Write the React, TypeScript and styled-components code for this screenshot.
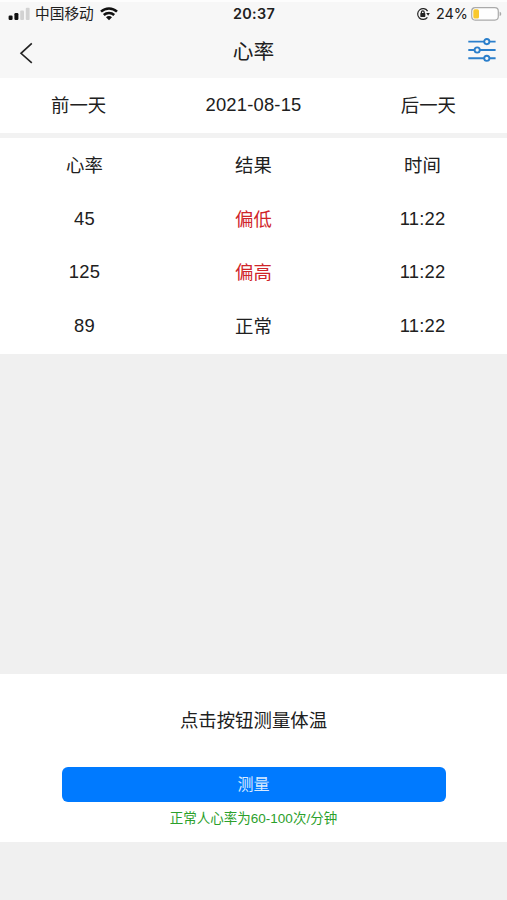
import React from "react";
import styled, { createGlobalStyle } from "styled-components";

const GlobalStyle = createGlobalStyle`
  * { box-sizing: border-box; }
  body {
    margin: 0;
    background: #f0f0f0;
    color: #202020;
    font-family: "Liberation Sans", "Noto Sans CJK SC", sans-serif;
    font-size: 18.4px;
  }
`;

const Screen = styled.div`
  display: flex;
  flex-direction: column;
  width: 507px;
  height: 900px;
  overflow: hidden;
  background: #f0f0f0;
`;

const Header = styled.header`
  height: 78px;
  border-top: 2px solid #fdfdfd;
  background: #f7f7f7;
`;

const StatusBar = styled.div`
  display: grid;
  grid-template-columns: 1fr auto 1fr;
  align-items: center;
  height: 23px;
  padding: 0 3px 0 8px;
  font-family: Inter, "Noto Sans CJK SC", sans-serif;
  font-size: 14.7px;
  line-height: 22px;
`;

const StatusGroup = styled.div<{ $end?: boolean }>`
  display: flex;
  align-items: center;
  justify-content: ${(p) => (p.$end ? "flex-end" : "flex-start")};
`;

const Carrier = styled.span`
  margin: 0 6px 0 5px;
`;

const Clock = styled.time`
  font-weight: 600;
  font-size: 14.4px;
  letter-spacing: 0.3px;
  transform: translateX(-2px);
`;

const Percent = styled.span`
  margin: 0 3px 0 6px;
  font-size: 14.4px;
`;

const TitleBar = styled.div`
  display: grid;
  grid-template-columns: 1fr auto 1fr;
  align-items: center;
  height: 53px;
  padding: 0 10px 0 18px;
`;

const Title = styled.h1`
  margin: 1px 0 0 -8px;
  font-size: 20.7px;
  line-height: 28px;
  font-weight: 400;
`;

const IconButton = styled.button<{ $end?: boolean }>`
  display: flex;
  justify-self: ${(p) => (p.$end ? "end" : "start")};
  padding: 0;
  margin: ${(p) => (p.$end ? "0 0 3px" : "2px 0 0")};
  border: 0;
  background: none;
`;

const DayBar = styled.nav`
  display: flex;
  align-items: center;
  justify-content: space-between;
  height: 60px;
  padding: 0 51px;
  background: #fff;
  border-bottom: 5px solid #f2f2f2;
`;

const DayLink = styled.span`
  padding-top: 1px;
  line-height: 26px;
`;

const DateText = styled.span`
  padding-bottom: 1px;
  line-height: 26px;
  letter-spacing: 0.2px;
`;

const Table = styled.div`
  display: grid;
  grid-template-rows: repeat(4, 53.8px);
  height: 216px;
  background: #fff;
`;

const Row = styled.div`
  display: grid;
  grid-template-columns: repeat(3, 1fr);
  align-items: center;
  text-align: center;
`;

const Cell = styled.span<{ $label?: boolean; $alert?: boolean }>`
  padding-top: ${(p) => (p.$label ? "2px" : "0")};
  line-height: 26px;
  letter-spacing: ${(p) => (p.$label ? "0" : "0.2px")};
  color: ${(p) => (p.$alert ? "#cf2529" : "inherit")};
`;

const MeasurePanel = styled.section`
  display: flex;
  flex-direction: column;
  align-items: center;
  height: 168px;
  margin-top: 320px;
  padding-top: 34px;
  background: #fff;
`;

const Prompt = styled.p`
  margin: 0;
  line-height: 26px;
`;

const MeasureButton = styled.button`
  width: 384px;
  height: 35px;
  margin-top: 33px;
  padding: 0;
  border: 0;
  border-radius: 6px;
  background: #007aff;
  color: #d9ebff;
  font: inherit;
  font-size: 16px;
  line-height: 36px;
`;

const Hint = styled.p`
  margin: 7px 0 0;
  color: #2ba02b;
  font-size: 13.5px;
  line-height: 20px;
`;

const readings = [
  { rate: 45, result: "偏低", time: "11:22", alert: true },
  { rate: 125, result: "偏高", time: "11:22", alert: true },
  { rate: 89, result: "正常", time: "11:22", alert: false },
];

const SignalIcon = () => (
  <svg width="22" height="14" viewBox="0 0 22 14">
    <rect x="0.6" y="8.5" width="4" height="4.5" rx="1.2" fill="#111" />
    <rect x="6.4" y="6" width="4" height="7" rx="1.2" fill="#111" />
    <rect x="12.2" y="3.5" width="3.8" height="9.5" rx="1" fill="#d2d2d2" />
    <rect x="17.8" y="0.8" width="3.8" height="12.2" rx="1" fill="#d2d2d2" />
  </svg>
);

const WifiIcon = () => (
  <svg width="18" height="14" viewBox="0 0 18 14" fill="none" stroke="#111" strokeWidth="2.5">
    <path d="M1 4.7C5.5 .3 12.5 .3 17 4.7" />
    <path d="M3.8 8c2.9-2.8 7.5-2.8 10.4 0" />
    <path d="M6 10.2c1.6-1.5 4.4-1.5 6 0L9 13.2Z" fill="#111" stroke="none" />
  </svg>
);

const RotationLockIcon = () => (
  <svg width="14" height="14" viewBox="0 0 14 14" fill="none" stroke="#222" strokeWidth="1.2">
    <path d="M11.6 4.1A5.4 5.4 0 1 0 11.4 10.3" />
    <path d="M10.2 5.9h3.6l-1.6 2.8Z" fill="#222" stroke="none" />
    <rect x="4.3" y="6.1" width="5" height="3.8" rx="0.6" fill="#222" stroke="none" />
    <path d="M5.4 6.4V5.2a1.4 1.4 0 0 1 2.8 0v1.2" />
  </svg>
);

const BatteryIcon = () => (
  <svg width="33" height="14" viewBox="0 0 33 14">
    <rect x="0.7" y="0.7" width="26.6" height="12.4" rx="3.5" fill="#fefefe" stroke="#aaa" strokeWidth="1.2" />
    <rect x="2.3" y="2.3" width="5.7" height="9.2" rx="1.6" fill="#f8c82e" />
    <path d="M28.6 4.7c2.2.6 2.2 3.8 0 4.4Z" fill="#aaa" />
  </svg>
);

const BackIcon = () => (
  <svg width="16" height="22" viewBox="0 0 16 22" fill="none" stroke="#222" strokeWidth="1.6">
    <path d="M13.8 1.4 3 11.3l10.8 9.5" />
  </svg>
);

const SettingsIcon = () => (
  <svg width="30" height="24" viewBox="0 0 30 24" fill="none" stroke="#2b7fcb" strokeWidth="1.9">
    <path d="M1.3 3.6h15.9m5.2 0h6.2M1.3 12h6.3m5.2 0h15.8M1.3 20.3h15.9m5.2 0h6.2" />
    <circle cx="19.8" cy="3.6" r="2.6" />
    <circle cx="10.2" cy="12" r="2.6" />
    <circle cx="19.8" cy="20.3" r="2.6" />
  </svg>
);

export default function App() {
  return (
    <>
      <GlobalStyle />
      <Screen>
        <Header>
          <StatusBar>
            <StatusGroup>
              <SignalIcon />
              <Carrier>中国移动</Carrier>
              <WifiIcon />
            </StatusGroup>
            <Clock>20:37</Clock>
            <StatusGroup $end>
              <RotationLockIcon />
              <Percent>24%</Percent>
              <BatteryIcon />
            </StatusGroup>
          </StatusBar>
          <TitleBar>
            <IconButton aria-label="返回">
              <BackIcon />
            </IconButton>
            <Title>心率</Title>
            <IconButton $end aria-label="设置">
              <SettingsIcon />
            </IconButton>
          </TitleBar>
        </Header>
        <DayBar>
          <DayLink>前一天</DayLink>
          <DateText>2021-08-15</DateText>
          <DayLink>后一天</DayLink>
        </DayBar>
        <Table>
          <Row>
            <Cell $label>心率</Cell>
            <Cell $label>结果</Cell>
            <Cell $label>时间</Cell>
          </Row>
          {readings.map((r) => (
            <Row key={r.rate}>
              <Cell>{r.rate}</Cell>
              <Cell $label $alert={r.alert}>{r.result}</Cell>
              <Cell>{r.time}</Cell>
            </Row>
          ))}
        </Table>
        <MeasurePanel>
          <Prompt>点击按钮测量体温</Prompt>
          <MeasureButton>测量</MeasureButton>
          <Hint>正常人心率为60-100次/分钟</Hint>
        </MeasurePanel>
      </Screen>
    </>
  );
}
